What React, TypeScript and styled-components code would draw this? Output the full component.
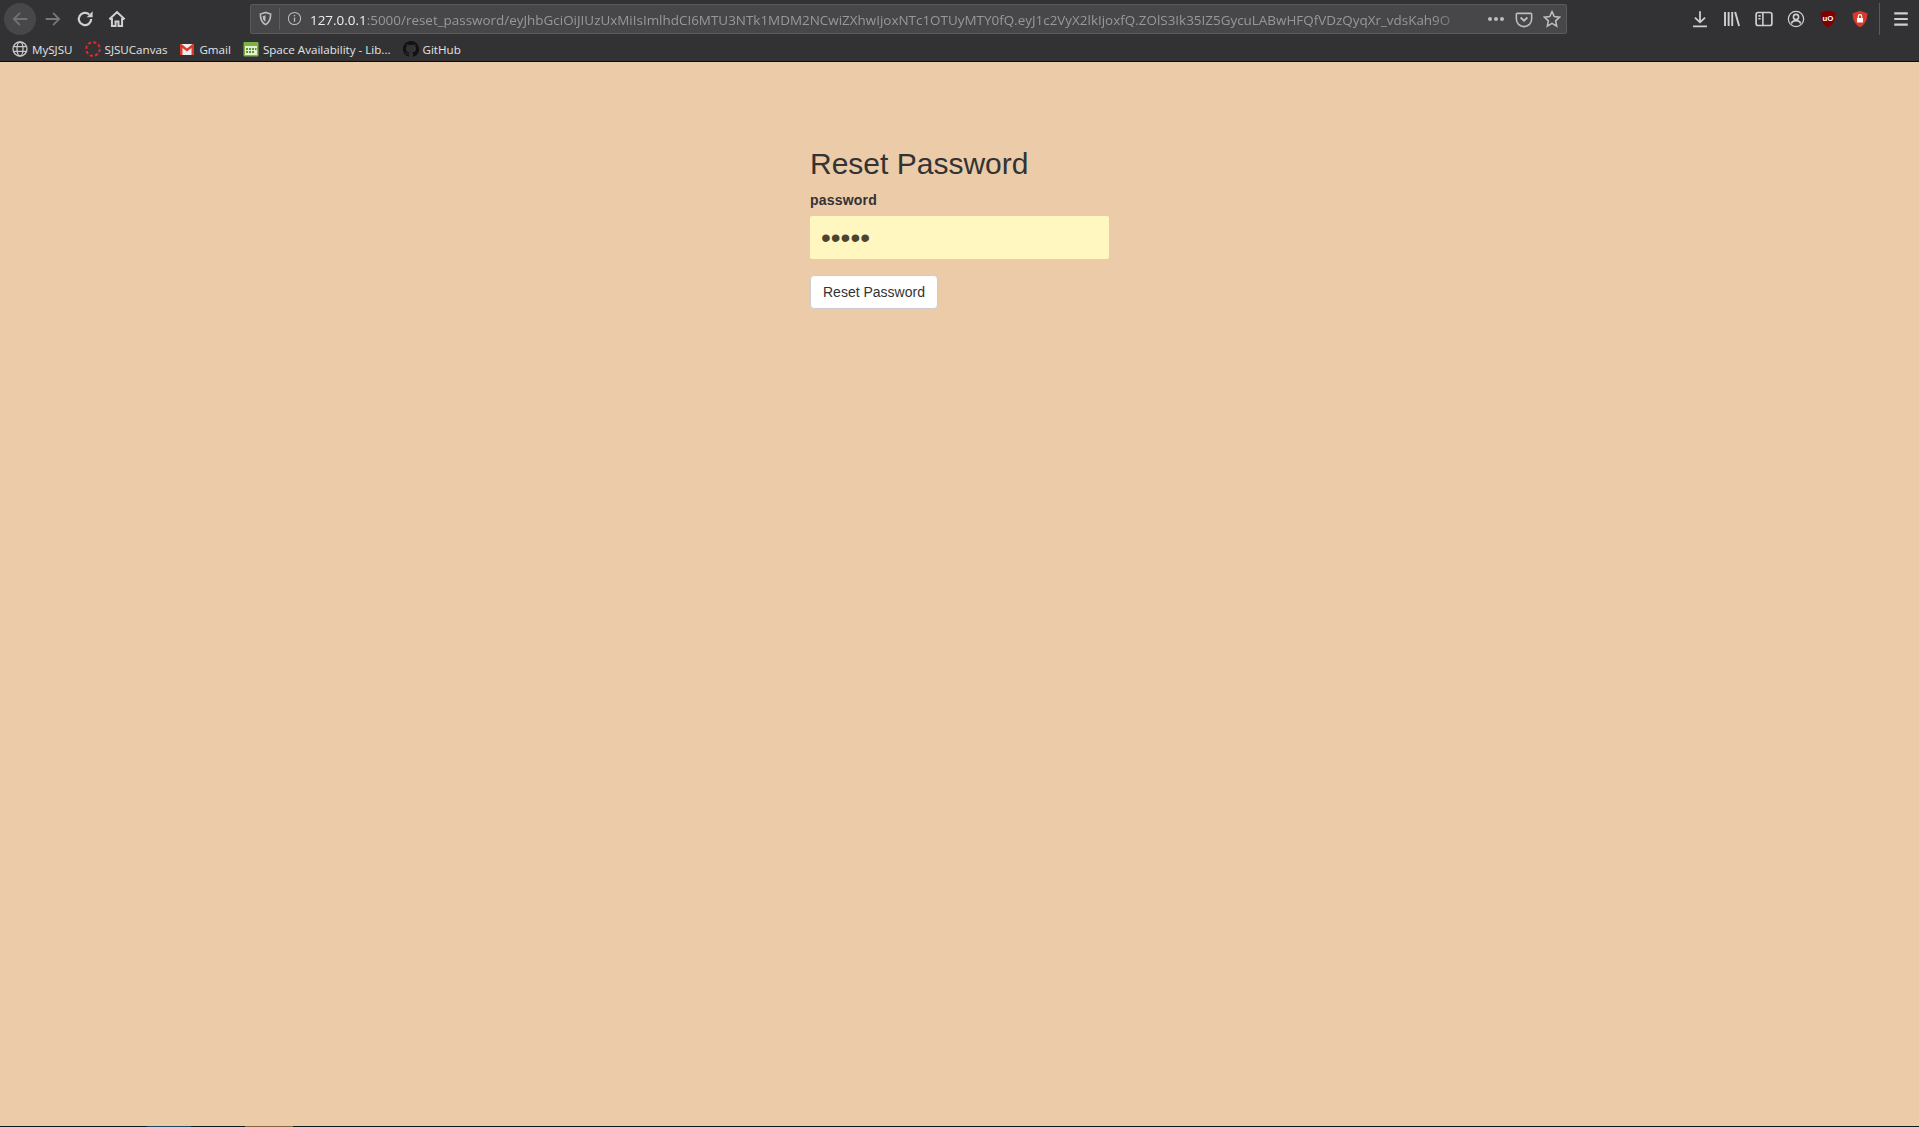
import React from "react";
import styled, { createGlobalStyle } from "styled-components";

const GlobalStyle = createGlobalStyle`
  html, body {
    margin: 0;
    padding: 0;
    height: 100%;
    overflow: hidden;
  }
  body {
    font-family: "Liberation Sans", Arial, sans-serif;
  }
  * {
    box-sizing: border-box;
  }
`;

const URL_HOST = "127.0.0.1";
const URL_REST =
  ":5000/reset_password/eyJhbGciOiJIUzUxMiIsImlhdCI6MTU3NTk1MDM2NCwiZXhwIjoxNTc1OTUyMTY0fQ.eyJ1c2VyX2lkIjoxfQ.ZOlS3Ik35IZ5GycuLABwHFQfVDzQyqXr_vdsKah9O";

function ToolIcon({ children, w = 18 }: { children: React.ReactNode; w?: number }) {
  return (
    <svg width={w} height={w} viewBox="0 0 16 16" fill="none" stroke="currentColor" strokeWidth="1.4">
      {children}
    </svg>
  );
}

export default function App() {
  return (
    <>
      <GlobalStyle />
      <Screen>
        <Chrome>
          <NavBar>
            <NavLeft>
              <BackButton>
                <ToolIcon>
                  <path d="M14.500 8H2.500M8 2.500 2.500 8 8 13.500" strokeWidth="1.6" />
                </ToolIcon>
              </BackButton>
              <ForwardButton $dim>
                <ToolIcon>
                  <path d="M1.500 8h12M8 2.500 13.500 8 8 13.500" strokeWidth="1.6" />
                </ToolIcon>
              </ForwardButton>
              <NavButton>
                <ToolIcon>
                  <path d="M13.500 8a5.500 5.500 0 1 1-1.700-4" strokeWidth="2" />
                  <path d="M14.800 1.200v5.300H9.500z" fill="currentColor" stroke="none" />
                </ToolIcon>
              </NavButton>
              <NavButton>
                <ToolIcon>
                  <path d="M1.200 8.200 8 1.800l6.800 6.400M3.500 7v7.200h3.200v-4h2.600v4h3.200V7" strokeWidth="1.800" />
                </ToolIcon>
              </NavButton>
            </NavLeft>
            <UrlBar>
              <ShieldSlot>
                <ToolIcon w={15}>
                  <path d="M8 1.500 2.500 3.200c0 5 1 9 5.500 11.300 4.500-2.300 5.500-6.300 5.500-11.300z" strokeWidth="1.700" />
                  <path d="M8 4.500 5 5.500c0 2.500.5 4.500 3 6z" fill="currentColor" stroke="none" />
                </ToolIcon>
              </ShieldSlot>
              <InfoSlot>
                <ToolIcon w={15}>
                  <circle cx="8" cy="8" r="6.500" strokeWidth="1.100" />
                  <path d="M8 7v4.500" strokeWidth="1.400" />
                  <path d="M8 4.200v1.500" strokeWidth="1.400" />
                </ToolIcon>
              </InfoSlot>
              <UrlText>
                <b>{URL_HOST}</b>
                {URL_REST}
              </UrlText>
              <UrlActions>
                <Dots>
                  <i />
                  <i />
                  <i />
                </Dots>
                <ToolIcon>
                  <path d="M2 3h12a.8.8 0 0 1 .8.8V8A6.800 6.800 0 0 1 1.200 8V3.800A.8.8 0 0 1 2 3z" />
                  <path d="m5 6.700 3 2.800 3-2.800" strokeWidth="1.700" />
                </ToolIcon>
                <ToolIcon>
                  <path d="m8 1.500 2 4.400 4.700.5-3.500 3.200 1 4.700L8 11.900l-4.200 2.400 1-4.700-3.500-3.200L6 5.900z" />
                </ToolIcon>
              </UrlActions>
            </UrlBar>
            <NavRight>
              <NavButton>
                <ToolIcon>
                  <path d="M8 1v10M3.500 6.700 8 11l4.500-4.300M1.800 14.600h12.400" strokeWidth="1.600" />
                </ToolIcon>
              </NavButton>
              <NavButton>
                <ToolIcon>
                  <path d="M1.800 1.800v12.400M5 1.800v12.400M8.200 1.800v12.400M10.800 1.800l3.500 12.400" strokeWidth="1.700" />
                </ToolIcon>
              </NavButton>
              <NavButton>
                <ToolIcon>
                  <rect x="1" y="2.200" width="14" height="11.600" rx="1.800" strokeWidth="1.500" />
                  <path d="M7 2.200v11.600M3 5.200h2M3 7.700h2" />
                </ToolIcon>
              </NavButton>
              <NavButton>
                <ToolIcon>
                  <circle cx="8" cy="8" r="6.800" strokeWidth="1.100" />
                  <circle cx="8" cy="6.200" r="2.300" />
                  <path d="M3.800 12c.6-2 2-2.600 4.200-2.600s3.600.6 4.200 2.600" strokeWidth="1.500" />
                </ToolIcon>
              </NavButton>
              <NavButton>
                <svg width="18" height="18" viewBox="0 0 16 16">
                  <path d="M8 .4 14.500 2c0 6.400-1.200 10.800-6.500 13.400C2.700 12.800 1.500 8.400 1.500 2z" fill="#800000" />
                  <text x="8" y="9.800" textAnchor="middle" fontSize="7" fontWeight="700" fill="#fff" fontFamily="Liberation Sans">
                    uO
                  </text>
                </svg>
              </NavButton>
              <NavButton>
                <svg width="18" height="18" viewBox="0 0 16 16">
                  <path d="M8 .6 14.500 2.800c0 5.500-1.700 10-6.500 12.600C3.200 12.800 1.500 8.300 1.500 2.800z" fill="#d9392b" />
                  <rect x="5.300" y="7" width="5.400" height="4.200" rx=".5" fill="#fff" />
                  <path d="M6.500 7V5.600a1.500 1.500 0 0 1 3 0V7" stroke="#fff" fill="none" />
                </svg>
              </NavButton>
              <Divider />
              <NavButton>
                <ToolIcon>
                  <path d="M2 3h12M2 8h12M2 13h12" strokeWidth="1.800" />
                </ToolIcon>
              </NavButton>
            </NavRight>
          </NavBar>
          <BookmarksBar>
            <Bookmark>
              <svg width="16" height="16" viewBox="0 0 16 16" fill="none" stroke="#c8c8c8" strokeWidth="1.300">
                <circle cx="8" cy="8" r="7" />
                <ellipse cx="8" cy="8" rx="3" ry="7" />
                <path d="M1.500 5.700h13M1.500 10.300h13" />
              </svg>
              MySJSU
            </Bookmark>
            <Bookmark>
              <svg width="16" height="16" viewBox="0 0 16 16" fill="none">
                <circle cx="8" cy="8" r="6.800" stroke="#e0282e" strokeWidth="2" strokeDasharray="3.200 2.140" />
              </svg>
              SJSUCanvas
            </Bookmark>
            <Bookmark>
              <svg width="16" height="16" viewBox="0 0 16 16">
                <rect x="1" y="3" width="14" height="11" fill="#eee" />
                <path d="M1 3v11h2.500V7L8 10.500 12.500 7v7H15V3h-1.500L8 7.500 2.500 3z" fill="#d9392b" />
              </svg>
              Gmail
            </Bookmark>
            <Bookmark>
              <svg width="16" height="16" viewBox="0 0 16 16">
                <rect x=".5" y="1" width="15" height="14.500" rx="1" fill="#7cb342" />
                <rect x="2" y="5" width="12" height="9" fill="#e4f0d0" />
                <path d="M3 7h2v2H3zM6 7h2v2H6zM9 7h2v2H9zM12 7h1.500v2H12zM3 10h2v2H3zM6 10h2v2H6zM9 10h2v2H9z" fill="#5d9632" />
              </svg>
              Space Availability - Lib...
            </Bookmark>
            <Bookmark>
              <svg width="16" height="16" viewBox="0 0 16 16" fill="#111">
                <path d="M8 0C3.580 0 0 3.580 0 8c0 3.540 2.290 6.530 5.470 7.590.4.070.55-.17.55-.38 0-.19-.01-.82-.01-1.490-2.010.37-2.530-.49-2.690-.94-.09-.23-.48-.94-.82-1.130-.28-.15-.68-.52-.01-.53.630-.01 1.080.58 1.230.82.720 1.210 1.870.87 2.330.66.070-.52.280-.87.510-1.070-1.780-.2-3.640-.89-3.640-3.950 0-.87.310-1.590.82-2.150-.08-.2-.36-1.020.08-2.120 0 0 .67-.21 2.200.82.640-.18 1.320-.27 2-.27s1.360.09 2 .27c1.530-1.040 2.200-.82 2.200-.82.440 1.100.16 1.920.08 2.120.51.560.82 1.270.82 2.150 0 3.070-1.870 3.750-3.650 3.950.29.250.54.730.54 1.480 0 1.070-.01 1.930-.01 2.200 0 .21.150.46.550.38A8.010 8.010 0 0 0 16 8c0-4.420-3.580-8-8-8z" />
              </svg>
              GitHub
            </Bookmark>
          </BookmarksBar>
        </Chrome>
        <Page>
          <ResetForm onSubmit={(e) => e.preventDefault()}>
            <Title>Reset Password</Title>
            <Label htmlFor="password">password</Label>
            <PasswordInput id="password" type="password" defaultValue="aaaaa" />
            <SubmitButton type="submit">Reset Password</SubmitButton>
          </ResetForm>
        </Page>
        <TaskbarEdge>
          <EdgeSegment $left={147} $width={44} $color="#1c4a60" />
          <EdgeSegment $left={245} $width={48} $color="#8a6240" />
        </TaskbarEdge>
      </Screen>
    </>
  );
}

const Screen = styled.div`
  height: 100vh;
  display: flex;
  flex-direction: column;
  background: #eccba9;
`;

const Chrome = styled.header`
  height: 62px;
  flex: none;
  background: #323234;
  color: #cfcfd0;
  border-bottom: 1px solid #0c0c0d;
`;

const NavBar = styled.div`
  height: 37px;
  display: flex;
  align-items: center;
  padding: 0 2px 0 4px;
`;

const NavLeft = styled.div`
  width: 246px;
  display: flex;
  align-items: center;
`;

const NavButton = styled.div<{ $dim?: boolean }>`
  width: 32px;
  height: 32px;
  display: flex;
  align-items: center;
  justify-content: center;
  flex: none;
  color: ${(p) => (p.$dim ? "#77777a" : "#cfcfd0")};
`;

const BackButton = styled(NavButton)`
  border-radius: 50%;
  background: #47474a;
  color: #717174;
`;

const ForwardButton = styled(NavButton)`
  margin-left: 1px;
`;

const UrlBar = styled.div`
  width: 1317px;
  height: 30px;
  display: flex;
  align-items: center;
  flex: none;
  background: #474749;
  border: 1px solid #5a5a5c;
  border-radius: 2px;
`;

const ShieldSlot = styled.div`
  width: 29px;
  height: 22px;
  display: flex;
  align-items: center;
  justify-content: center;
  flex: none;
  color: #bdbdbe;
  border-right: 1px solid #5e5e60;
`;

const InfoSlot = styled.div`
  width: 29px;
  display: flex;
  justify-content: center;
  flex: none;
  color: #bdbdbe;
`;

const UrlText = styled.div`
  flex: 1;
  min-width: 0;
  overflow: hidden;
  white-space: nowrap;
  font-family: "Open Sans", sans-serif;
  font-size: 13.45px;
  color: #98989a;
  margin-left: 1px;
  padding-top: 2px;
  mask-image: linear-gradient(to left, transparent 4px, #000 44px);

  b {
    font-weight: 400;
    color: #eeeeee;
  }
`;

const UrlActions = styled.div`
  width: 90px;
  display: flex;
  align-items: center;
  justify-content: flex-end;
  gap: 10px;
  flex: none;
  padding-right: 5px;
  color: #bdbdbe;
`;

const Dots = styled.div`
  display: flex;
  gap: 2px;
  margin-right: 1px;

  i {
    width: 4px;
    height: 4px;
    border-radius: 50%;
    background: #bdbdbe;
  }
`;

const NavRight = styled.div`
  flex: 1;
  display: flex;
  align-items: center;
  justify-content: flex-end;
`;

const Divider = styled.div`
  width: 1px;
  height: 32px;
  margin: 0 5px 0 3px;
  background: #5a5a5c;
`;

const BookmarksBar = styled.nav`
  height: 24px;
  display: flex;
  align-items: center;
  gap: 12px;
  padding-left: 12px;
`;

const Bookmark = styled.div`
  display: flex;
  align-items: center;
  gap: 4px;
  font-family: "Open Sans", sans-serif;
  font-size: 11.6px;
  color: #e4e4e5;
  white-space: nowrap;
`;

const Page = styled.main`
  flex: 1;
  display: flex;
  justify-content: center;
  padding-top: 85px;
`;

const ResetForm = styled.form`
  width: 299px;
  display: flex;
  flex-direction: column;
  align-items: flex-start;
`;

const Title = styled.h2`
  margin: 0 0 10px;
  font-size: 30px;
  line-height: 33px;
  font-weight: 500;
  white-space: nowrap;
  color: #333;
`;

const Label = styled.label`
  margin-bottom: 6px;
  font-size: 14px;
  line-height: 20px;
  font-weight: 700;
  letter-spacing: 0.2px;
  color: #333;
`;

const PasswordInput = styled.input`
  width: 100%;
  height: 43px;
  padding: 0 11px;
  border: none;
  border-radius: 2px;
  outline: none;
  background: #fff6c0;
  color: #4d4430;
  font-family: "Liberation Sans", sans-serif;
  font-size: 28px;
`;

const SubmitButton = styled.button`
  margin-top: 16px;
  height: 34px;
  padding: 0 12px;
  background: #fff;
  border: 1px solid #ccc;
  border-radius: 4px;
  color: #333;
  font-family: "Liberation Sans", sans-serif;
  font-size: 14px;
  line-height: 20px;
`;

const TaskbarEdge = styled.div`
  position: relative;
  height: 1px;
  flex: none;
  background: #0f1a20;
`;

const EdgeSegment = styled.div<{ $left: number; $width: number; $color: string }>`
  position: absolute;
  top: 0;
  left: ${(p) => p.$left}px;
  width: ${(p) => p.$width}px;
  height: 1px;
  background: ${(p) => p.$color};
`;
